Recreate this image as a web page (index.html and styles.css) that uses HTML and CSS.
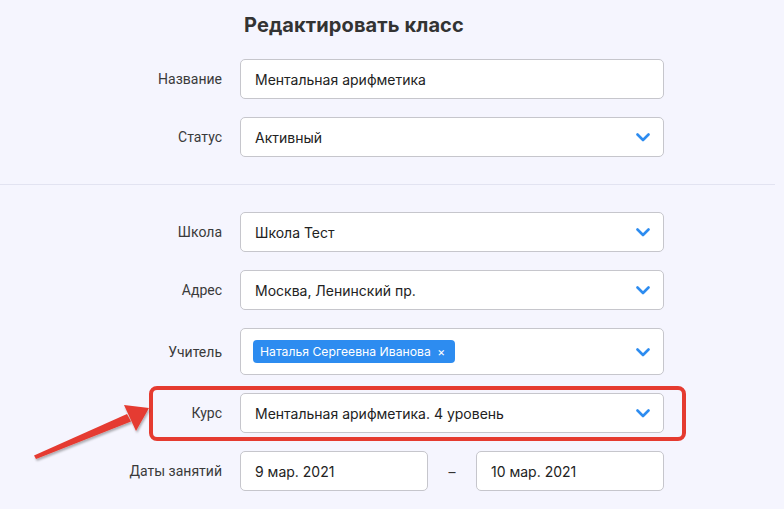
FILE: index.html
```html
<!DOCTYPE html>
<html lang="ru">
<head>
    <meta charset="UTF-8">
    <meta name="viewport" content="width=device-width, initial-scale=1.0">
    <title>Редактировать класс</title>
    <link rel="stylesheet" href="styles.css">
</head>
<body>
    <div class="page">
        <h1 class="title">Редактировать класс</h1>

        <div class="form-row">
            <label class="label">Название</label>
            <div class="field">Ментальная арифметика</div>
        </div>
        <div class="form-row">
            <label class="label">Статус</label>
            <div class="field select">Активный
                <svg class="chevron" width="14" height="9" viewBox="0 0 14 9"><path d="M1.5 1.5 L7 7 L12.5 1.5" fill="none" stroke="#2d8cf0" stroke-width="2.6" stroke-linecap="round" stroke-linejoin="round"/></svg>
            </div>
        </div>

        <div class="divider"></div>

        <div class="form-row">
            <label class="label">Школа</label>
            <div class="field select">Школа Тест
                <svg class="chevron" width="14" height="9" viewBox="0 0 14 9"><path d="M1.5 1.5 L7 7 L12.5 1.5" fill="none" stroke="#2d8cf0" stroke-width="2.6" stroke-linecap="round" stroke-linejoin="round"/></svg>
            </div>
        </div>
        <div class="form-row">
            <label class="label">Адрес</label>
            <div class="field select">Москва, Ленинский пр.
                <svg class="chevron" width="14" height="9" viewBox="0 0 14 9"><path d="M1.5 1.5 L7 7 L12.5 1.5" fill="none" stroke="#2d8cf0" stroke-width="2.6" stroke-linecap="round" stroke-linejoin="round"/></svg>
            </div>
        </div>
        <div class="form-row">
            <label class="label">Учитель</label>
            <div class="field select tall">
                <span class="tag">Наталья Сергеевна Иванова <span class="tag-close">×</span></span>
                <svg class="chevron" width="14" height="9" viewBox="0 0 14 9"><path d="M1.5 1.5 L7 7 L12.5 1.5" fill="none" stroke="#2d8cf0" stroke-width="2.6" stroke-linecap="round" stroke-linejoin="round"/></svg>
            </div>
        </div>
        <div class="form-row marked">
            <label class="label">Курс</label>
            <div class="field select">Ментальная арифметика. 4 уровень
                <svg class="chevron" width="14" height="9" viewBox="0 0 14 9"><path d="M1.5 1.5 L7 7 L12.5 1.5" fill="none" stroke="#2d8cf0" stroke-width="2.6" stroke-linecap="round" stroke-linejoin="round"/></svg>
            </div>
            <div class="highlight"></div>
        </div>
        <div class="form-row">
            <label class="label">Даты занятий</label>
            <div class="dates">
                <div class="field">9 мар. 2021</div>
                <span class="dash">–</span>
                <div class="field">10 мар. 2021</div>
            </div>
        </div>

        <!-- annotation arrow -->
        <svg class="arrow" width="784" height="509" viewBox="0 0 784 509">
            <defs>
                <filter id="shadow" x="-10%" y="-10%" width="130%" height="140%">
                    <feDropShadow dx="1" dy="2" stdDeviation="1" flood-color="#000" flood-opacity="0.3"/>
                </filter>
            </defs>
            <g filter="url(#shadow)" fill="#e53b30">
                <polygon points="34,455.5 127,414 131,421.5 36,459"/>
                <polygon points="149,408 124,405 130,418 136,431"/>
            </g>
        </svg>
    </div>
</body>
</html>
```

FILE: styles.css
```css
* {
    box-sizing: border-box;
}

body {
    margin: 0;
    padding: 0;
    background-color: #f5f5fe;
    font-family: Inter, "Noto Sans", sans-serif;
    color: #222;
}

.page {
    position: relative;
    width: 784px;
    height: 509px;
    overflow: hidden;
    padding-top: 13px;
}

.title {
    margin: 0 0 22px 0;
    padding-left: 244px;
    font-size: 20px;
    font-weight: 700;
    line-height: 24px;
    color: #333;
    letter-spacing: 0.1px;
}

.form-row {
    position: relative;
    display: flex;
    align-items: center;
    padding-left: 102px;
    margin-bottom: 18px;
}

.label {
    width: 120px;
    margin-right: 18px;
    text-align: right;
    font-family: Roboto, "Liberation Sans", sans-serif;
    font-size: 14px;
    color: #3a3a3a;
}

.field {
    position: relative;
    display: flex;
    align-items: center;
    width: 424px;
    height: 40px;
    padding: 0 14px;
    background-color: #fff;
    border: 1px solid #c6c6cc;
    border-radius: 5px;
    font-size: 14px;
    color: #222;
}

.field.tall {
    height: 47px;
    padding-left: 12px;
}

.chevron {
    position: absolute;
    right: 13px;
    top: 50%;
    margin-top: -4px;
}

.divider {
    height: 1px;
    width: 775px;
    background-color: #e2e3f1;
    margin: 27px 0 27px 0;
}

.tag {
    display: inline-flex;
    align-items: center;
    height: 23px;
    padding: 0 10px 0 7px;
    background-color: #2d8cf0;
    border-radius: 4px;
    color: #fff;
    font-size: 12.2px;
    white-space: pre;
}

.tag-close {
    margin-left: 3px;
    font-size: 12px;
}

.marked .highlight {
    position: absolute;
    left: 149px;
    top: -7px;
    width: 537px;
    height: 55px;
    border: 4px solid #e53b30;
    border-radius: 8px;
}

.dates {
    display: flex;
    align-items: center;
}

.dates .field {
    width: 188px;
}

.dash {
    width: 48px;
    text-align: center;
    font-size: 14px;
    color: #333;
}

.arrow {
    position: absolute;
    left: 0;
    top: 0;
    pointer-events: none;
}
```
